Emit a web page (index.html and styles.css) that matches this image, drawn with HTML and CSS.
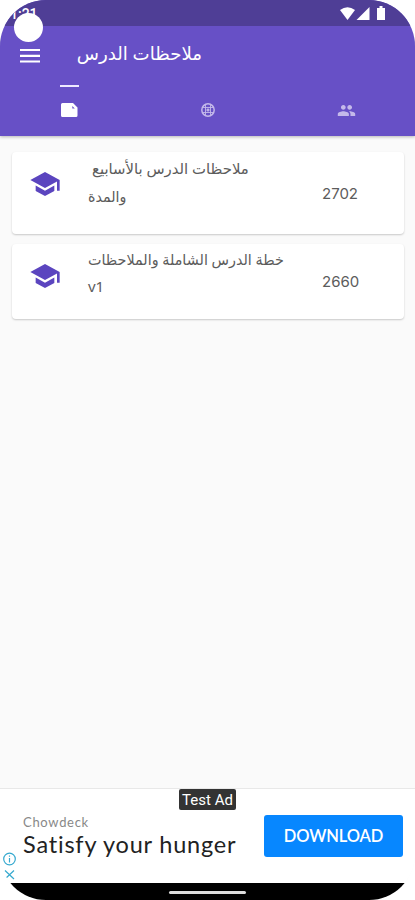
FILE: index.html
```html
<!DOCTYPE html>
<html lang="ar">
<head>
<meta charset="utf-8">
<title>ملاحظات الدرس</title>
<link rel="stylesheet" href="styles.css">
</head>
<body>
<div class="screen">
  <header class="top">
    <div class="status">
      <span class="clock">1:21</span>
      <i class="camera"></i>
      <svg class="status-icons" width="52" height="16" viewBox="0 0 52 16" fill="#fff"><path d="M4 4Q11.500-1.500 19 4L11.500 14Z"/><path d="M33.500 1V14H20.500Z"/><path d="M41 2h2.500V0h3v2H49v12h-8z"/></svg>
    </div>
    <div class="bar">
      <svg class="menu" width="20" height="16" viewBox="0 0 20 16"><path d="M0 2h20M0 7.800h20M0 13.500h20" stroke="#fff" stroke-width="2.200"/></svg>
      <h1 class="title" dir="rtl"><span class="fit">ملاحظات الدرس</span></h1>
    </div>
    <nav class="tabs">
      <div class="tab active"><svg width="17" height="14" viewBox="0 0 17 14"><path fill="#fff" fill-rule="evenodd" d="M1.500 0H12l4.500 4.500v8Q16.500 14 15 14H1.500Q0 14 0 12.500v-11Q0 0 1.500 0zM11.300 3v2.500h2.500z"/></svg></div>
      <div class="tab"><svg width="16" height="16" viewBox="0 0 16 16" fill="none" stroke="#c4b9ea"><circle cx="8" cy="8" r="6.200" stroke-width="1.500"/><path d="M2 5.500h12M2 10.500h12M5.500 2v12M10.500 2v12" stroke-width=".9"/><path d="M6.500 8h3M8 6.500v3" stroke-width="1.500"/></svg></div>
      <div class="tab"><svg width="19" height="19" viewBox="0 0 24 24" fill="#c4b9ea"><path d="M16 11c1.660 0 2.990-1.340 2.990-3S17.660 5 16 5s-3 1.340-3 3 1.340 3 3 3zm-8 0c1.660 0 2.990-1.340 2.990-3S9.660 5 8 5 5 6.340 5 8s1.340 3 3 3zm0 2c-2.330 0-7 1.170-7 3.500V19h14v-2.500c0-2.330-4.670-3.500-7-3.500zm8 0c-.29 0-.62.020-.97.050 1.160.84 1.970 1.970 1.970 3.450V19h6v-2.500c0-2.330-4.670-3.500-7-3.500z"/></svg></div>
    </nav>
  </header>
  <main class="list">
    <article class="card first">
      <svg class="cap" width="32" height="32" viewBox="0 0 24 24"><path d="M5 13.180v4L12 21l7-3.820v-4L12 17l-7-3.820zM12 3L1 9l11 6 9-4.910V17h2V9L12 3z"/></svg>
      <div class="name"><span class="fit line-a">ملاحظات الدرس بالأسابيع</span><span class="fit line-b">والمدة</span></div>
      <span class="count">2702</span>
    </article>
    <article class="card second">
      <svg class="cap" width="32" height="32" viewBox="0 0 24 24"><path d="M5 13.180v4L12 21l7-3.820v-4L12 17l-7-3.820zM12 3L1 9l11 6 9-4.910V17h2V9L12 3z"/></svg>
      <div class="name"><span class="fit line-c">خطة الدرس الشاملة والملاحظات</span><span class="fit line-d">v1</span></div>
      <span class="count">2660</span>
    </article>
  </main>
  <footer class="ad">
    <span class="test">Test Ad</span>
    <div class="copy"><small>Chowdeck</small><strong>Satisfy your hunger</strong></div>
    <button class="download">DOWNLOAD</button>
    <svg class="choices" width="14" height="30" viewBox="0 0 14 30" fill="none" stroke="#35a9cf" stroke-width="1.200"><circle cx="7.500" cy="7" r="5.800"/><path d="M7.500 6v4.500M7.500 3.500v1.300M3 18.500l9 8.500M12 18.500l-9 8.500"/></svg>
  </footer>
  <div class="gesture"><i></i></div>
</div>
</body>
</html>
```
FILE: styles.css
```css
* { box-sizing: border-box; }
body { margin: 0; background: #fff; font-family: "Noto Sans", "DejaVu Sans", sans-serif; }
.screen { width: 415px; height: 900px; display: flex; flex-direction: column; overflow: hidden; border-radius: 46px; background: #fafafa; }
.top { height: 136px; flex: none; background: #6750c6; box-shadow: 0 1px 3px #0004; }
.status { height: 26px; background: #4f3e96; position: relative; display: flex; justify-content: space-between; padding: 6px 27px 0 10px; }
.clock { color: #fff; font: 500 14px/16px Roboto, sans-serif; }
.camera { position: absolute; left: 14px; top: 13px; width: 29px; height: 29px; border-radius: 50%; background: #fff; }
.bar { height: 58px; display: flex; padding: 22px 0 0 20px; }
.title { margin: -9px 0 0 37px; width: 125px; font-size: 18px; line-height: 28px; font-weight: 400; color: #fff; white-space: nowrap; }
.title .fit { transform: scaleX(1.01); transform-origin: right; }
.tabs { height: 50px; display: grid; grid-template-columns: repeat(3, 138.500px); }
.tab { display: flex; align-items: center; justify-content: center; border-top: 2px solid transparent; }
.active { position: relative; }
.active::before { content: ""; position: absolute; left: 60px; top: -1px; width: 19px; height: 2px; background: #eee9ff; }
.list { flex: 1; padding: 16px 11px 0 12px; }
.card { display: flex; background: #fff; border-radius: 4px; box-shadow: 0 1px 2px #0003; color: #5c5c5c; }
.first { height: 82px; margin-bottom: 10px; }
.second { height: 75px; }
.cap { margin: 16px 0 0 17px; fill: #5b45bf; flex: none; }
.name { margin: 2px 0 0 27px; width: 234px; font-size: 15px; line-height: 28px; }
.second .name { line-height: 27px; }
.fit { display: block; width: max-content; white-space: nowrap; transform-origin: left; }
.line-a { margin-left: 4px; transform: scaleX(.99); }
.line-b { transform: scaleX(.95); }
.line-c { transform: scaleX(.955); }
.count { font: 15px/20px Inter, sans-serif; margin-top: 32px; }
.second .count { margin-top: 28px; }
.ad { height: 95px; flex: none; background: #fff; border-top: 1px solid #e8e8e8; position: relative; display: flex; justify-content: space-between; padding: 0 12px 0 23px; }
.test { position: absolute; left: 179px; top: 0; width: 57px; height: 21px; border-radius: 2px; background: #333; color: #fff; font: 15px/22px Roboto, sans-serif; text-align: center; white-space: nowrap; }
.copy { padding-top: 25px; white-space: nowrap; }
.copy small, .copy strong { display: block; width: max-content; }
.copy small { font: 13px/17px Lato, sans-serif; color: #888; letter-spacing: .7px; }
.copy strong { font: 23.500px/26px Lato, sans-serif; color: #222; letter-spacing: .8px; }
.download { width: 139px; height: 42px; margin-top: 26px; padding: 0; border: 0; border-radius: 3px; background: #0787ff; color: #fff; font: 600 16.500px/42px Lato, sans-serif; letter-spacing: -.1px; }
.choices { position: absolute; left: 2px; top: 63px; }
.gesture { height: 17px; flex: none; background: #000; display: flex; justify-content: center; padding-top: 8px; }
.gesture i { width: 77px; height: 3px; border-radius: 2px; background: #ddd; }
```
